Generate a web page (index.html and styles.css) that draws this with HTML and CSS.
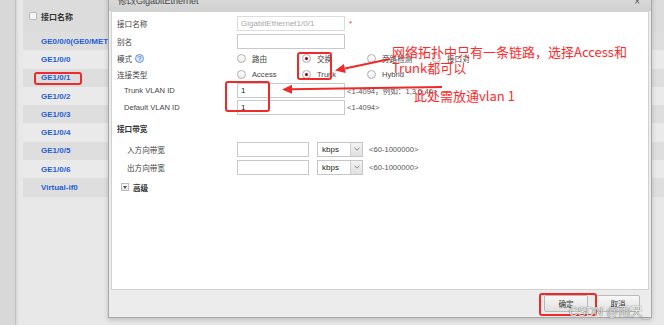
FILE: index.html
```html
<!DOCTYPE html>
<html lang="zh-CN">
<head>
  <meta charset="UTF-8" />
  <meta name="viewport" content="width=device-width, initial-scale=1.0" />
  <title>修改GigabitEthernet</title>
  <link rel="stylesheet" href="styles.css">
</head>
<body>

<div class="page">
  <div class="side"></div>
  <div class="panel">
    <div class="if-table">
      <div class="if-head"><span class="chk"></span>接口名称</div>
      <div class="if-row">GE0/0/0(GE0/METH)</div>
      <div class="if-row">GE1/0/0</div>
      <div class="if-row">GE1/0/1</div>
      <div class="if-row">GE1/0/2</div>
      <div class="if-row">GE1/0/3</div>
      <div class="if-row">GE1/0/4</div>
      <div class="if-row">GE1/0/5</div>
      <div class="if-row">GE1/0/6</div>
      <div class="if-row">Virtual-if0</div>
    </div>
  </div>
</div>

<div class="dialog">
  <div class="dlg-title">修改GigabitEthernet<span class="dlg-close">×</span></div>
  <div class="dlg-body">
    <div class="frow r-name">
      <div class="flabel">接口名称</div>
      <div class="input disabled">GigabitEthernet1/0/1</div>
      <span class="req">*</span>
    </div>
    <div class="frow r-alias">
      <div class="flabel">别名</div>
      <div class="input"></div>
    </div>
    <div class="frow r-radio">
      <div class="flabel">模式
        <svg class="help" width="9" height="9" viewBox="0 0 9 9">
          <circle cx="4.5" cy="4.5" r="4" fill="#dbe8fb" stroke="#4a7fd0" stroke-width="0.8"/>
          <text x="4.5" y="7" text-anchor="middle" font-size="7" font-family="Liberation Sans" fill="#2d5fb0">?</text>
        </svg>
      </div>
      <div class="radios">
        <span class="opt"><i class="radio"></i>路由</span>
        <span class="opt"><i class="radio on"></i>交换</span>
        <span class="opt"><i class="radio"></i>旁路检测</span>
        <span class="opt"><i class="radio"></i>接口对</span>
      </div>
    </div>
    <div class="frow r-radio">
      <div class="flabel">连接类型</div>
      <div class="radios">
        <span class="opt"><i class="radio"></i>Access</span>
        <span class="opt"><i class="radio on"></i>Trunk</span>
        <span class="opt"><i class="radio"></i>Hybrid</span>
      </div>
    </div>
    <div class="frow">
      <div class="flabel sub">Trunk VLAN ID</div>
      <div class="input">1</div>
      <span class="hint">&lt;1-4094，例如：1,3,5,40&gt;</span>
    </div>
    <div class="frow">
      <div class="flabel sub">Default VLAN ID</div>
      <div class="input">1</div>
      <span class="hint">&lt;1-4094&gt;</span>
    </div>

    <div class="section">接口带宽</div>
    <div class="brow">
      <div class="flabel deep">入方向带宽</div>
      <div class="input short"></div>
      <div class="select">kbps<span class="sel-btn"><svg width="6" height="4" viewBox="0 0 6 4"><path d="M0.5 0.8 L3 3.2 L5.5 0.8" fill="none" stroke="#777" stroke-width="0.9"/></svg></span></div>
      <span class="hint">&lt;60-1000000&gt;</span>
    </div>
    <div class="brow">
      <div class="flabel deep">出方向带宽</div>
      <div class="input short"></div>
      <div class="select">kbps<span class="sel-btn"><svg width="6" height="4" viewBox="0 0 6 4"><path d="M0.5 0.8 L3 3.2 L5.5 0.8" fill="none" stroke="#777" stroke-width="0.9"/></svg></span></div>
      <span class="hint">&lt;60-1000000&gt;</span>
    </div>
    <div class="adv"><span class="adv-btn"><svg width="4" height="3" viewBox="0 0 4 3"><path d="M0 0 L4 0 L2 3 Z" fill="#555"/></svg></span>高级</div>
  </div>
  <div class="dlg-foot">
    <button class="btn">确定</button>
    <button class="btn">取消</button>
  </div>
</div>

<div class="marks">
  <div class="rbox box-if"></div>
  <div class="rbox box-mode"></div>
  <div class="rbox box-vlan"></div>
  <div class="rbox box-ok"></div>
  <svg class="arrows" width="664" height="325" viewBox="0 0 664 325">
    <line x1="390" y1="59" x2="345" y2="68.4" stroke="#ee2a2a" stroke-width="2"/>
    <polygon points="335,70.5 343.9,64 345.7,72.9" fill="#ee2a2a"/>
    <line x1="442" y1="87" x2="291" y2="89.3" stroke="#ee2a2a" stroke-width="2"/>
    <polygon points="282,89.5 292,84.8 292,93.8" fill="#ee2a2a"/>
  </svg>
  <div class="note note-link">网络拓扑中只有一条链路，选择Access和<br>Trunk都可以</div>
  <div class="note note-vlan">此处需放通vlan 1</div>
  <div class="watermark">CSDN @雨天_</div>
</div>

</body>
</html>
```

FILE: styles.css
```css
* { margin: 0; padding: 0; box-sizing: border-box; }

body {
  width: 664px;
  height: 325px;
  overflow: hidden;
  position: relative;
  font-family: 'Liberation Sans', 'Noto Sans CJK SC', sans-serif;
  font-size: 7.6px;
  color: #333;
  background: #e7e7e7;
}

/* page behind the dialog */
.page {
  display: flex;
  height: 325px;
}

.side {
  width: 16px;
  background: #d8d8d8;
  border-right: 1px solid #c2c2c2;
}

.panel {
  flex: 1;
  background: #e8e8e8;
  padding-left: 7px;
  box-shadow: inset 3px 0 2px -1px rgba(0,0,0,0.06);
}

.if-head {
  height: 32px;
  display: flex;
  align-items: center;
  padding-left: 6px;
  background: #dcdcdc;
  font-weight: bold;
  font-size: 8px;
  color: #333;
}

.chk {
  width: 8px;
  height: 8px;
  margin-right: 4px;
  border: 1px solid #bbb;
  border-radius: 1px;
  background: #f4f4f4;
}

.if-row {
  height: 18.3px;
  display: flex;
  align-items: center;
  padding-left: 18px;
  font-weight: bold;
  font-size: 8px;
  color: #1e5ed8;
  background: #dedede;
  white-space: nowrap;
}

.if-row:nth-child(odd) {
  background: #eaeaea;
}

/* dialog */
.dialog {
  position: absolute;
  left: 108px;
  top: -12px;
  width: 544px;
  background: #ececec;
  border: 1px solid #a8a8a8;
  box-shadow: 0 2px 5px rgba(0,0,0,0.18);
}

.dlg-title {
  height: 22px;
  line-height: 25px;
  padding-left: 9px;
  font-size: 9px;
  color: #444;
  background: linear-gradient(#e2e2e2, #d0d0d0);
  position: relative;
}

.dlg-close {
  position: absolute;
  right: 11px;
  top: 0;
  font-size: 10px;
  color: #555;
}

.dlg-body {
  height: 279px;
  margin: 0 2px;
  background: #fff;
  border: 1px solid #d2d2d2;
  padding: 3px 0 0 5px;
}

.frow {
  display: flex;
  align-items: center;
  height: 17px;
}

.frow.r-alias { height: 18px; }
.frow.r-radio { height: 16px; }

.flabel {
  width: 120px;
  flex: none;
  display: flex;
  align-items: center;
  color: #444;
}

.flabel.sub { padding-left: 7px; }
.flabel.deep { padding-left: 10px; }

.help { margin-left: 3px; }

.input {
  width: 108px;
  height: 15px;
  border: 1px solid #c9c9c9;
  background: #fff;
  padding-left: 3px;
  line-height: 13px;
  font-size: 8px;
  color: #222;
}

.input.disabled {
  border-color: #dcdcdc;
  color: #a8a8a8;
}

.input.short { width: 72px; }

.req {
  color: #e33;
  margin-left: 4px;
  font-size: 8px;
}

.hint {
  margin-left: 2px;
  color: #555;
  white-space: nowrap;
}

.radios { display: flex; }

.opt {
  width: 65px;
  display: flex;
  align-items: center;
  color: #444;
}

.radio {
  width: 9px;
  height: 9px;
  margin-right: 6px;
  border: 1px solid #b0b0b0;
  border-radius: 50%;
  background: linear-gradient(#fff, #ececec);
  display: flex;
  align-items: center;
  justify-content: center;
}

.radio.on::after {
  content: '';
  width: 3px;
  height: 3px;
  border-radius: 50%;
  background: #9a0000;
}

.section {
  height: 24px;
  display: flex;
  align-items: center;
  font-weight: bold;
  color: #333;
}

.brow {
  display: flex;
  align-items: center;
  height: 18px;
}

.select {
  width: 46px;
  height: 15px;
  margin-left: 8px;
  border: 1px solid #c6c6c6;
  display: flex;
  align-items: center;
  justify-content: space-between;
  padding-left: 4px;
  font-size: 8px;
  color: #222;
}

.sel-btn {
  width: 12px;
  height: 13px;
  background: linear-gradient(#f3f3f3, #e0e0e0);
  border-left: 1px solid #cfcfcf;
  display: flex;
  align-items: center;
  justify-content: center;
}

.select + .hint { margin-left: 6px; }

.adv {
  margin-top: 3px;
  height: 16px;
  display: flex;
  align-items: center;
  padding-left: 4px;
  font-weight: bold;
  color: #333;
}

.adv-btn {
  width: 8px;
  height: 8px;
  margin-right: 4px;
  border: 1px solid #bdbdbd;
  background: linear-gradient(#fafafa, #e3e3e3);
  display: flex;
  align-items: center;
  justify-content: center;
}

.dlg-foot {
  height: 27px;
  display: flex;
  justify-content: flex-end;
  align-items: flex-start;
  gap: 8px;
  padding: 5px 11px 0 0;
}

.btn {
  width: 44px;
  height: 17px;
  border: 1px solid #b9b9b9;
  border-radius: 2px;
  background: linear-gradient(#f8f8f8, #e0e0e0);
  font-family: 'Liberation Sans', 'Noto Sans CJK SC', sans-serif;
  font-size: 7.6px;
  color: #333;
}

/* red annotations drawn on top of the screenshot */
.marks {
  position: absolute;
  inset: 0;
  pointer-events: none;
}

.arrows {
  position: absolute;
  left: 0;
  top: 0;
}

.rbox {
  position: absolute;
  border: 2px solid #ee2a2a;
  border-radius: 3px;
}

.box-if   { left: 34px;  top: 72px;  width: 48px; height: 13px; }
.box-mode { left: 297px; top: 52px;  width: 35px; height: 28px; }
.box-vlan { left: 225px; top: 81px;  width: 45px; height: 31px; }
.box-ok   { left: 539px; top: 293px; width: 58px; height: 23px; }

.note {
  position: absolute;
  font-family: 'Noto Sans CJK SC', sans-serif;
  font-size: 13px;
  line-height: 16px;
  color: #ff2b2b;
  white-space: nowrap;
}

.note-link { left: 392px; top: 44px; }
.note-vlan { left: 414px; top: 88px; }

.watermark {
  position: absolute;
  left: 569px;
  top: 302px;
  font-family: 'Liberation Sans', 'Noto Sans CJK SC', sans-serif;
  font-size: 12px;
  color: rgba(255,255,255,0.85);
  text-shadow: 0 0 1px rgba(60,60,60,0.8), 0 0 1px rgba(90,90,90,0.6);
  white-space: nowrap;
}
```
